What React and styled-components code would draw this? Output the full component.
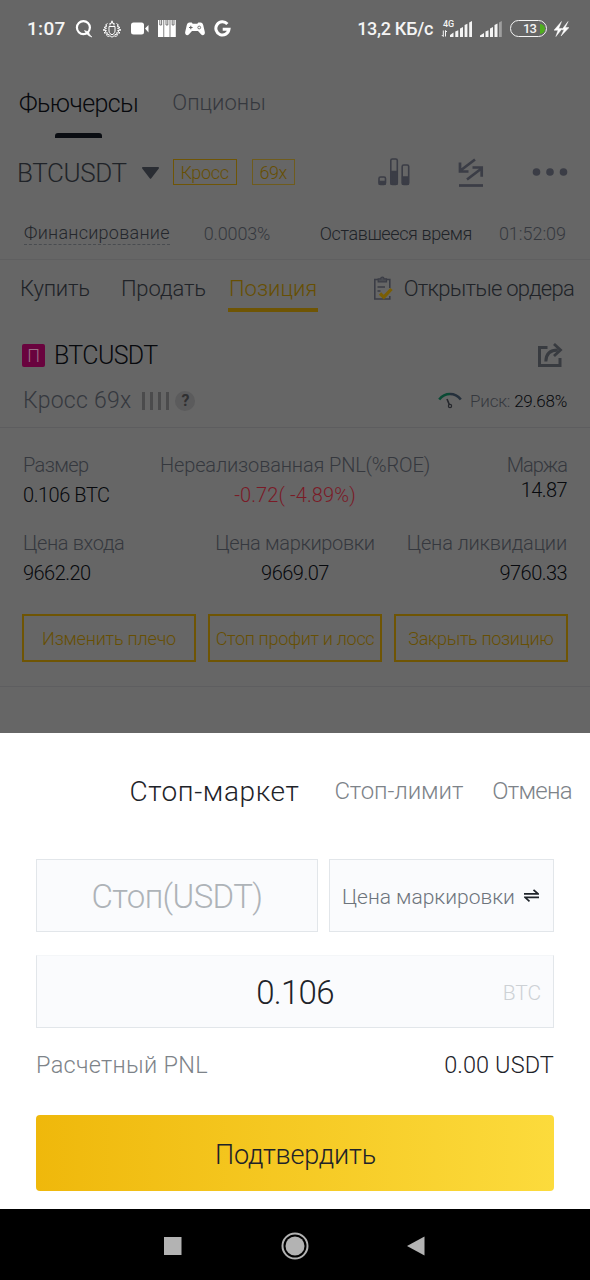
import React from 'react';
import { useState } from 'react';
import styled, { createGlobalStyle, css } from 'styled-components';

const GlobalStyle = createGlobalStyle`
  body {
    margin: 0;
    background: #666666;
    font-family: Roboto, 'Liberation Sans', sans-serif;
    font-weight: 300;
  }
  * {
    box-sizing: border-box;
  }
  svg {
    display: block;
    flex: none;
  }
`;

const Screen = styled.div`
  width: 590px;
  height: 1280px;
  display: flex;
  flex-direction: column;
  overflow: hidden;
  background: #666666;
`;

const Text = styled.span`
  font-size: ${({ $size }) => $size}px;
  letter-spacing: ${({ $track }) => $track || 0}px;
  color: ${({ $color }) => $color || '#35383e'};
  white-space: pre;
`;

/* ---------- status bar ---------- */

const StatusBar = styled.header`
  height: 57px;
  padding: 0 21px 0 27px;
  display: flex;
  align-items: center;
  justify-content: space-between;
`;

const StatusGroup = styled.div`
  display: flex;
  align-items: center;
  gap: ${({ $gap }) => $gap}px;
`;

const StatusText = styled(Text)`
  font-weight: 500;
  color: #f4f4f4;
`;

const Network = styled.div`
  width: 33px;
  display: flex;
  justify-content: flex-end;
`;

const Battery = styled.div`
  width: 37px;
  height: 17px;
  padding: 0 1px 0 12px;
  border: 1.5px solid #f4f4f4;
  border-radius: 9px;
  display: flex;
  align-items: center;
  justify-content: space-between;
  overflow: hidden;
  color: #f4f4f4;
  font-size: 13px;
  font-weight: 500;
  letter-spacing: -0.9px;
`;

const Charge = styled.i`
  width: 5px;
  height: 10px;
  border-radius: 0 5px 5px 0;
  background: #4fae1e;
`;

/* ---------- market header ---------- */

const MarketTabs = styled.nav`
  height: 92px;
  padding: 0 0 2px 19px;
  display: flex;
  align-items: center;
  gap: 34px;
`;

const MarketTab = styled.div`
  position: relative;
  padding-top: ${({ $active }) => ($active ? 2 : 0)}px;

  ${({ $active }) =>
    $active &&
    css`
      &::after {
        content: '';
        position: absolute;
        left: 36px;
        bottom: -20px;
        width: 47px;
        height: 5px;
        border-radius: 3px 3px 0 0;
        background: #0a0d12;
      }
    `}
`;

const PairRow = styled.div`
  height: 48px;
  padding: 0 22px 0 17px;
  display: flex;
  align-items: center;
`;

const Caret = styled.svg`
  margin: 0 14px 0 15px;
`;

const Badge = styled.span`
  width: ${({ $width }) => $width}px;
  height: 26px;
  margin: 0 15px 2px 0;
  border: 1px solid ${({ $soft }) => ($soft ? '#6f5c1c' : '#6f5505')};
  display: flex;
  align-items: center;
  justify-content: center;
`;

const PairActions = styled.div`
  margin: 0 0 2px auto;
  display: flex;
  align-items: center;
  gap: 48px;
`;

const FundingRow = styled.div`
  height: 63px;
  padding: 11px 24px 0 24px;
  border-bottom: 1px solid #5f5f60;
  display: flex;
  align-items: center;
  justify-content: space-between;
`;

const FundingGroup = styled.div`
  display: flex;
  align-items: center;
  gap: ${({ $gap }) => $gap}px;
`;

const Funding = styled(Text)`
  font-weight: 350;
  line-height: 22px;
  border-bottom: 1px dashed #494c50;
`;

const OrderTabs = styled.nav`
  height: 56px;
  padding: 0 16px 0 20px;
  display: flex;
  align-items: center;
`;

const OrderTab = styled.div`
  height: 56px;
  margin-right: ${({ $gap }) => $gap}px;
  display: flex;
  align-items: center;
  position: relative;

  ${({ $active }) =>
    $active &&
    css`
      &::after {
        content: '';
        position: absolute;
        left: -1px;
        right: -1px;
        bottom: 4px;
        height: 4px;
        background: #6f5504;
      }
    `}
`;

const OpenOrders = styled.div`
  margin-left: auto;
  display: flex;
  align-items: center;
  gap: 11px;
`;

/* ---------- position ---------- */

const Position = styled.section`
  height: 371px;
  padding-top: 14px;
  border-bottom: 1px solid #5e5e60;
`;

const TitleRow = styled.div`
  height: 50px;
  padding: 0 27px 0 22px;
  display: flex;
  align-items: center;
  justify-content: space-between;
`;

const TitleGroup = styled.div`
  display: flex;
  align-items: center;
  gap: 9px;
`;

const SideMark = styled.span`
  width: 23px;
  height: 23px;
  border-radius: 2px;
  background: #69033e;
  display: flex;
  align-items: center;
  justify-content: center;
`;

const MetaRow = styled.div`
  height: 48px;
  padding: 0 23px 6px 23px;
  border-bottom: 1px solid #5d5d5f;
  display: flex;
  align-items: center;
  justify-content: space-between;
`;

const MetaGroup = styled.div`
  display: flex;
  align-items: center;
`;

const Bars = styled.div`
  margin: 0 6px 0 11px;
  display: flex;
  gap: 5px;

  i {
    width: 3px;
    height: 18px;
    background: #4b4b4c;
  }
`;

const Help = styled.span`
  width: 20px;
  height: 20px;
  border-radius: 50%;
  background: #5b5b5c;
  display: flex;
  align-items: center;
  justify-content: center;
  color: #303032;
  font-size: 16px;
  font-weight: 700;
`;

const Stats = styled.div`
  padding: 22px 23px 0;
  display: grid;
  row-gap: 18px;
`;

const StatRow = styled.div`
  display: grid;
  grid-template-columns: 1fr auto 1fr;
`;

const Stat = styled.div`
  display: flex;
  flex-direction: column;
  align-items: ${({ $align }) => $align};

  span {
    line-height: 30px;
  }
  span + span {
    line-height: ${({ $tight }) => ($tight ? 20 : 30)}px;
  }
`;

const Actions = styled.div`
  margin-top: 26px;
  padding: 0 22px;
  display: grid;
  grid-template-columns: repeat(3, 1fr);
  gap: 12px;
`;

const OutlineButton = styled.button`
  height: 48px;
  padding: 0;
  border: 2px solid #6f5504;
  background: none;
  font: inherit;
  display: flex;
  align-items: center;
  justify-content: center;
`;

/* ---------- bottom sheet ---------- */

const Sheet = styled.section`
  margin-top: auto;
  height: 476px;
  padding: 0 36px;
  background: #ffffff;
`;

const SheetTabs = styled.nav`
  height: 126px;
  margin-right: -18px;
  padding-bottom: 10px;
  display: flex;
  align-items: center;
  justify-content: flex-end;
`;

const SheetTab = styled.button`
  margin: 0 0 0 ${({ $gap }) => $gap || 0}px;
  padding: 0;
  border: none;
  background: none;
  font: inherit;
`;

const FieldRow = styled.div`
  display: grid;
  grid-template-columns: 282px 225px;
  gap: 11px;
`;

const Field = styled.div`
  height: 73px;
  padding-top: 2px;
  border: 1px solid #e2e6ea;
  background: #fafbfd;
  display: flex;
  align-items: center;
  justify-content: center;
  gap: 9px;
`;

const AmountField = styled(Field)`
  margin-top: 23px;
  padding-right: 12px;
  padding-left: 12px;
  border-top-color: #f4f6f8;
  display: grid;
  grid-template-columns: 1fr auto 1fr;
  column-gap: 0;

  span:last-child {
    justify-self: end;
  }
`;

const SwapMark = styled.svg`
  margin: 0 2px 2px 0;
`;

const Summary = styled.div`
  height: 44px;
  margin: 15px 0 28px;
  display: flex;
  align-items: center;
  justify-content: space-between;
`;

const Confirm = styled.button`
  width: 100%;
  height: 76px;
  padding: 3px 0 0 1px;
  border: none;
  border-radius: 4px;
  background: linear-gradient(90deg, #efb80b, #fcdb3c);
  font: inherit;
`;

const NavBar = styled.footer`
  height: 71px;
  padding: 3px 1px 0 0;
  background: #000000;
  display: flex;
  align-items: center;
  justify-content: center;
  gap: 98.5px;
`;

/* ---------- icons ---------- */

const QIcon = () => (
  <svg width="18" height="18" viewBox="0 0 18 18" fill="none" stroke="#fff">
    <circle cx="8.4" cy="7.600" r="6.500" strokeWidth="2.2" />
    <path d="M9.500 10.500c1.400 3 3.800 5.600 7.500 6.500-2-1.400-2.600-3-3.500-5z" fill="#fff" strokeWidth="0.6" />
  </svg>
);

const EmblemIcon = () => (
  <svg width="20" height="18" viewBox="0 0 20 18" fill="none" stroke="#fff" strokeWidth="1">
    <path d="M7 6.500h6v4.500c0 2-1.500 3-3 3.800-1.500-.8-3-1.800-3-3.800z" />
    <path d="M8 5.500V3l1 .8L10 .8l1 3 1-.8v2.500M5.500 3.500 3.500 5l1.500 1-3 1.500 2.500.8L1 10l3.500.7L2 13l3.500-.2-1 2.400 3-1M14.500 3.500l2 1.500-1.500 1 3 1.500-2.500.8L19 10l-3.500.7L18 13l-3.500-.2 1 2.400-3-1M5.500 16.500 8 15.800l2 1.400 2-1.400 2.500.7" />
  </svg>
);

const CameraIcon = () => (
  <svg width="18" height="13" viewBox="0 0 18 13" fill="#fff">
    <rect x="0" y="0.500" width="13" height="12" rx="2.500" />
    <path d="M14 6.500 17.500 3v7.500z" />
  </svg>
);

const BooksIcon = () => (
  <svg width="18" height="17" viewBox="0 0 18 17" fill="#fff">
    <path d="M0 0h5.400v17H0zM6.200 0h5.400v17H6.200zM12.400 0h5.400v17h-5.400z" />
    <path d="M1.800 0v5h1.800V0M8 0v5h1.800V0M14.200 0v5H16V0" fill="none" stroke="#666" strokeWidth="0.9" />
  </svg>
);

const GamepadIcon = () => (
  <svg width="20" height="14" viewBox="0 0 20 14">
    <path
      d="M4.500.5h2.200l1 1.200h4.600l1-1.200h2.200c1.500 0 2.300 1 2.700 2.600l1.600 7c.5 2.700-1.900 4.100-3.600 2.500L13 9H7l-3.200 3.600C2.100 14.200-.3 12.800.2 10.100l1.600-7C2.200 1.500 3 .5 4.500.5z"
      fill="#fff"
    />
    <path d="M4 5.500h3.600M5.800 3.700v3.600" stroke="#666" strokeWidth="1.1" />
    <circle cx="14.200" cy="5.500" r="1.400" fill="none" stroke="#666" strokeWidth="0.9" />
  </svg>
);

const GoogleIcon = () => (
  <svg width="17" height="17" viewBox="0 0 17 17" fill="none" stroke="#fff" strokeWidth="3">
    <path d="M13.400 4A6.600 6.600 0 1 0 15 9.300H8.700" />
  </svg>
);

const Signal = ({ weak }) => (
  <svg width="23" height="16" viewBox="0 0 23 16" fill="#f4f4f4">
    <path d="M0 14.500 4 12v4H0zM5.500 10.500l3-1.200V16h-3zM10 7.500l3-1.500v10h-3zM14.500 4l3-1.500V16h-3z" />
    <path d="M19 1.500 21.800 0v16H19z" opacity={weak ? 0.4 : 1} />
  </svg>
);

const NetworkIcon = () => (
  <svg width="32" height="18" viewBox="0 0 32 18">
    <text x="2" y="6.800" fontSize="9" fontWeight="500" fill="#f4f4f4" fontFamily="Roboto">
      4G
    </text>
    <path d="M2.300 10.500v6L.8 15M4.500 16.500v-6L6 12" fill="none" stroke="#f4f4f4" strokeWidth="1" />
    <path d="M9 15l3.500-2.500V17H9zM14.300 11.500l3-1.200V17h-3zM19 8.500l3-1.500v10h-3zM23.600 5l2.800-1.200V17h-2.800zM28.200 2.500l2.800-1.500v16h-2.800z" fill="#f4f4f4" />
  </svg>
);

const BoltIcon = () => (
  <svg width="15" height="16" viewBox="0 0 16 16" fill="#fff" stroke="#fff" strokeWidth="0.5">
    <path d="M8 0 0 9.300h4.300L2 16l6.800-8.600H5zM15 0 8.200 8.800h2.500L7.500 15.500 16 6.500h-4z" />
  </svg>
);

const ChartIcon = () => (
  <svg width="32" height="28" viewBox="0 0 32 28" fill="none" stroke="#3b3d46" strokeWidth="1.600">
    <rect x="1" y="19" width="6.500" height="7.500" rx="1.500" />
    <rect x="12.800" y="1" width="6.500" height="25.500" rx="1.500" />
    <rect x="24.200" y="7" width="6.500" height="19.500" rx="1.500" />
    <path d="M1.500 23.500H7V26H1.500zM13.300 13.500h5.500V26h-5.500zM24.700 19h5.500v7h-5.500z" fill="#3b3d46" />
  </svg>
);

const TransferIcon = () => (
  <svg width="26" height="29" viewBox="0 0 26 29" fill="none" stroke="#3b3d46" strokeWidth="2.700">
    <path d="M17 1.500 2.500 12.500M2 4.500v9h8.500" />
    <path d="M9 21.500 23.500 10.500M14.500 9.500h9.200v9.200" />
    <path d="M1 27.500h24" />
  </svg>
);

const DotsIcon = () => (
  <svg width="36" height="8" viewBox="0 0 36 8" fill="#3b3d46">
    <circle cx="4.500" cy="4" r="3.800" />
    <circle cx="18" cy="4" r="3.800" />
    <circle cx="31.500" cy="4" r="3.800" />
  </svg>
);

const ClipboardIcon = () => (
  <svg width="20" height="25" viewBox="0 0 20 25" fill="none">
    <path d="M5 3.500H1.800V23h15v-3M13.500 3.500h3.300V12" stroke="#3b3d46" strokeWidth="1.600" />
    <path d="M5.200 5.800V2.800h2.500C7.700.6 11 .6 11 2.800h2.500v3z" fill="#4a4c52" stroke="#3b3d46" strokeWidth="1.200" />
    <path d="M4.500 11h7.500M4.500 15h3" stroke="#3b3d46" strokeWidth="1.300" />
    <path d="m7 17.500 3.800 3.700L18.500 13" stroke="#7a5e04" strokeWidth="3.200" />
  </svg>
);

const ShareIcon = () => (
  <svg width="26" height="25" viewBox="0 0 26 25" fill="none" stroke="#383b40" strokeWidth="3">
    <path d="M10.500 4.500h-8v18h20.500V15" />
    <path d="M8.800 18.500c.2-8 4-11.500 12-11.500" />
    <path d="M17 1 23.500 7 17 13" strokeWidth="2.800" />
  </svg>
);

const GaugeIcon = () => (
  <svg width="24" height="17" viewBox="0 0 24 17" fill="none">
    <path d="M1.200 7.500C4 4 7.500 2 12 2" stroke="#0a4a34" strokeWidth="2.600" />
    <path d="M12 2c4.500 0 8 2 10.800 5.500" stroke="#25303c" strokeWidth="2.600" />
    <path d="m9 7 2.500 6" stroke="#25272c" strokeWidth="1.600" />
    <circle cx="12" cy="14" r="1.600" stroke="#25272c" strokeWidth="1.200" />
  </svg>
);

const SwapIcon = () => (
  <SwapMark width="15" height="13" viewBox="0 0 15 13" fill="none" stroke="#1e2329" strokeWidth="1.700">
    <path d="M0 4.800h14L9.500.8M15 8.300H1l4.500 4" />
  </SwapMark>
);

const positionRows = [
  [
    { label: 'Размер', labelTrack: -0.6, value: '0.106 BTC', track: -0.45 },
    { label: 'Нереализованная PNL(%ROE)', labelTrack: -0.15, value: '-0.72( -4.89%)', track: 0.1, color: '#7a1a26' },
    { label: 'Маржа', labelTrack: -0.95, value: '14.87', track: -0.6, tight: true },
  ],
  [
    { label: 'Цена входа', labelTrack: -0.35, value: '9662.20', track: -0.55 },
    { label: 'Цена маркировки', labelTrack: -0.35, value: '9669.07', track: -0.5 },
    { label: 'Цена ликвидации', labelTrack: -0.18, value: '9760.33', track: -0.55 },
  ],
];

const aligns = ['flex-start', 'center', 'flex-end'];

const actions = [
  { text: 'Изменить плечо', track: -0.18 },
  { text: 'Стоп профит и лосс', track: -0.3 },
  { text: 'Закрыть позицию', track: -0.33 },
];

const sheetTabs = [
  { text: 'Стоп-маркет', size: 28, track: 0.6, gap: 0 },
  { text: 'Стоп-лимит', size: 24, track: -0.1, gap: 35 },
  { text: 'Отмена', size: 24, track: -0.7, gap: 29 },
];

const App = () => {
  const [activeTab, setActiveTab] = useState(0);

  return (
    <Screen>
      <GlobalStyle />
      <StatusBar>
        <StatusGroup $gap={9}>
          <StatusText $size={19} $track={0.3}>1:07</StatusText>
          <QIcon />
          <EmblemIcon />
          <CameraIcon />
          <BooksIcon />
          <GamepadIcon />
          <GoogleIcon />
        </StatusGroup>
        <StatusGroup $gap={7}>
          <StatusText $size={18} $track={-0.3}>13,2 КБ/с</StatusText>
          <Network>
            <NetworkIcon />
          </Network>
          <Signal weak />
          <Battery>
            13
            <Charge />
          </Battery>
          <BoltIcon />
        </StatusGroup>
      </StatusBar>

      <MarketTabs>
        <MarketTab $active>
          <Text $size={25} $track={-0.6} $color="#07090d">Фьючерсы</Text>
        </MarketTab>
        <MarketTab>
          <Text $size={22} $track={0}>Опционы</Text>
        </MarketTab>
      </MarketTabs>

      <PairRow>
        <Text $size={26} $track={-0.4} $color="#202328">BTCUSDT</Text>
        <Caret width="17" height="12" viewBox="0 0 17 12" fill="#2a2d33">
          <path d="M1 0h15a1 1 0 0 1 .8 1.500L9.300 11.300a1 1 0 0 1-1.600 0L.2 1.500A1 1 0 0 1 1 0z" />
        </Caret>
        <Badge $width={64}>
          <Text $size={18} $track={-0.3} $color="#674f03">Кросс</Text>
        </Badge>
        <Badge $width={43} $soft>
          <Text $size={18} $track={-0.5} $color="#674f03">69x</Text>
        </Badge>
        <PairActions>
          <ChartIcon />
          <TransferIcon />
          <DotsIcon />
        </PairActions>
      </PairRow>

      <FundingRow>
        <FundingGroup $gap={34}>
          <Funding $size={18} $track={0.26} $color="#24272c">Финансирование</Funding>
          <Text $size={18} $track={-0.15}>0.0003%</Text>
        </FundingGroup>
        <FundingGroup $gap={27}>
          <Text $size={18} $track={-0.38} $color="#202328">Оставшееся время</Text>
          <Text $size={18} $track={-0.05}>01:52:09</Text>
        </FundingGroup>
      </FundingRow>

      <OrderTabs>
        <OrderTab $gap={31}>
          <Text $size={22} $track={-0.2} $color="#202328">Купить</Text>
        </OrderTab>
        <OrderTab $gap={23}>
          <Text $size={22} $track={-0.1} $color="#202328">Продать</Text>
        </OrderTab>
        <OrderTab $active>
          <Text $size={22} $track={0} $color="#674f03">Позиция</Text>
        </OrderTab>
        <OpenOrders>
          <ClipboardIcon />
          <Text $size={22} $track={-0.75} $color="#202328">Открытые ордера</Text>
        </OpenOrders>
      </OrderTabs>

      <Position>
        <TitleRow>
          <TitleGroup>
            <SideMark>
              <Text $size={18} $color="#9a6f86">П</Text>
            </SideMark>
            <Text $size={25} $track={-0.65} $color="#07090d">BTCUSDT</Text>
          </TitleGroup>
          <ShareIcon />
        </TitleRow>
        <MetaRow>
          <MetaGroup>
            <Text $size={23} $track={0.25}>Кросс 69x</Text>
            <Bars>
              <i />
              <i />
              <i />
              <i />
            </Bars>
            <Help>?</Help>
          </MetaGroup>
          <MetaGroup>
            <GaugeIcon />
            <Text $size={17} $track={-0.2}>{'  Риск: '}</Text>
            <Text $size={17} $track={-0.25} $color="#07090d">29.68%</Text>
          </MetaGroup>
        </MetaRow>

        <Stats>
          {positionRows.map((row, index) => (
            <StatRow key={index}>
              {row.map((stat, column) => (
                <Stat key={stat.label} $align={aligns[column]} $tight={stat.tight}>
                  <Text $size={20} $track={stat.labelTrack}>{stat.label}</Text>
                  <Text $size={20} $track={stat.track} $color={stat.color || '#07090d'}>{stat.value}</Text>
                </Stat>
              ))}
            </StatRow>
          ))}
        </Stats>

        <Actions>
          {actions.map((action) => (
            <OutlineButton key={action.text}>
              <Text $size={18} $track={action.track} $color="#674f03">{action.text}</Text>
            </OutlineButton>
          ))}
        </Actions>
      </Position>

      <Sheet>
        <SheetTabs>
          {sheetTabs.map((tab, index) => (
            <SheetTab key={tab.text} $gap={tab.gap} onClick={() => setActiveTab(index)}>
              <Text $size={tab.size} $track={tab.track} $color={activeTab === index ? '#1e2329' : '#7d8389'}>
                {tab.text}
              </Text>
            </SheetTab>
          ))}
        </SheetTabs>
        <FieldRow>
          <Field>
            <Text $size={33} $track={-0.6} $color="#aeb3b8">Стоп(USDT)</Text>
          </Field>
          <Field>
            <Text $size={21} $track={0} $color="#6d747c">Цена маркировки</Text>
            <SwapIcon />
          </Field>
        </FieldRow>
        <AmountField>
          <span />
          <Text $size={33} $track={-0.7} $color="#1e2329">0.106</Text>
          <Text $size={21} $track={-0.1} $color="#cdd1d5">BTC</Text>
        </AmountField>
        <Summary>
          <Text $size={23.5} $track={0.3} $color="#7d8389">Расчетный PNL</Text>
          <Text $size={23.5} $track={0.1} $color="#1e2329">0.00 USDT</Text>
        </Summary>
        <Confirm>
          <Text $size={27} $track={-0.2} $color="#1e2329">Подтвердить</Text>
        </Confirm>
      </Sheet>

      <NavBar>
        <svg width="18" height="18" viewBox="0 0 18 18">
          <rect width="17.500" height="18" fill="#b3b3b3" />
        </svg>
        <svg width="28" height="28" viewBox="0 0 28 28">
          <circle cx="14" cy="14" r="12.500" fill="none" stroke="#b3b3b3" strokeWidth="2" />
          <circle cx="14" cy="14" r="9.500" fill="#b3b3b3" />
        </svg>
        <svg width="18" height="20" viewBox="0 0 18 20">
          <path d="M17.500.5v19L0 10z" fill="#b3b3b3" />
        </svg>
      </NavBar>
    </Screen>
  );
};

export default App;
